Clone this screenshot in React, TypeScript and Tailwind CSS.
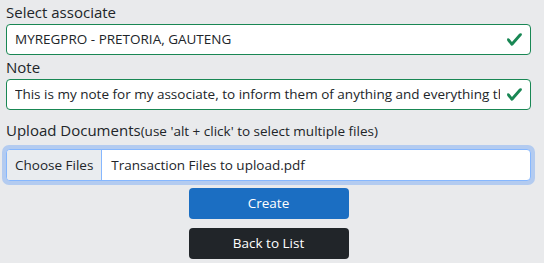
function Check() {
  return (
    <svg viewBox="0 0 8 8" className="h-[17px] w-[17px] shrink-0">
      <path
        fill="#198754"
        d="M2.3 6.73.6 4.53c-.4-1.04.46-1.4 1.1-.8l1.1 1.4 3.4-3.8c.6-.63 1.6-.27 1.2.7l-4 4.6c-.43.5-.8.4-1.1.1z"
      />
    </svg>
  );
}

function ValidInput({ value }: { value: string }) {
  return (
    <div className="flex h-[31px] items-center rounded-[4px] border border-[#198754] bg-white pl-[8px] pr-[7px]">
      <span className="flex-1 overflow-hidden whitespace-nowrap text-[13.5px] text-[#212529]">{value}</span>
      <span className="ml-[6px]">
        <Check />
      </span>
    </div>
  );
}

export default function App() {
  return (
    <div className="min-h-[263px] w-[544px] bg-[#e9eaec] pl-[6px] pr-[13px] font-['Open_Sans',sans-serif]">
      <div className="flex flex-col">
        <label className="text-[15px] leading-[24px] text-[#212529]">Select associate</label>
        <ValidInput value="MYREGPRO - PRETORIA, GAUTENG" />
        <label className="text-[15px] leading-[24px] text-[#212529]">Note</label>
        <ValidInput value="This is my note for my associate, to inform them of anything and everything that they need to know" />
        <label className="mt-[8px] text-[15px] leading-[24px] text-[#212529]">
          Upload Documents<span className="text-[13.5px]">(use 'alt + click' to select multiple files)</span>
        </label>
        <div className="-mx-[4px] mt-[2px] rounded-[7px] bg-[#b3cbf0] p-[4px]">
          <div className="flex h-[32px] items-stretch overflow-hidden rounded-[4px] border border-[#86b7fe] bg-white">
            <span className="flex items-center border-r border-[#86b7fe] bg-[#e9ecef] px-[8px] text-[13.5px] text-[#212529]">
              Choose Files
            </span>
            <span className="flex items-center pl-[9px] text-[13.5px] text-[#212529]">Transaction Files to upload.pdf</span>
          </div>
        </div>
        <div className="mt-[3px] flex flex-col items-center gap-[9px]">
          <button className="flex h-[31px] w-[160px] items-center justify-center rounded-[4px] bg-[#1b6ec2] text-[13.5px] text-white">
            Create
          </button>
          <button className="flex h-[31px] w-[160px] items-center justify-center rounded-[4px] bg-[#212529] text-[13.5px] text-white">
            Back to List
          </button>
        </div>
      </div>
    </div>
  );
}
